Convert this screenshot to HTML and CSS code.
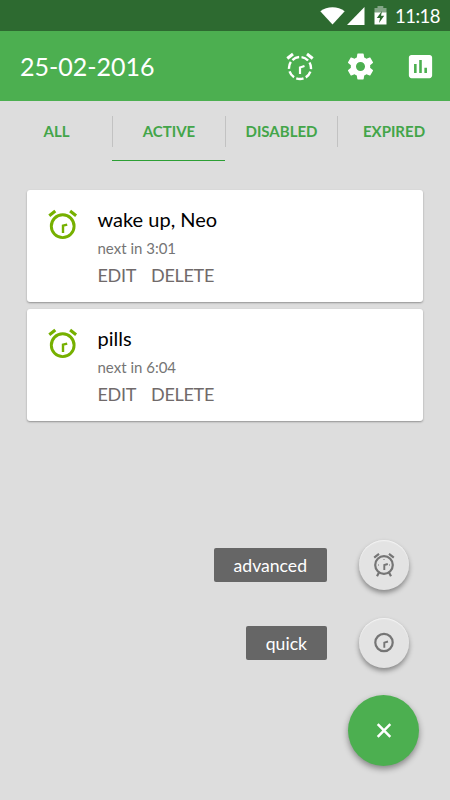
FILE: index.html
```html
<!DOCTYPE html>
<html lang="en">
<head>
<meta charset="utf-8">
<title>Alarms</title>
<link rel="stylesheet" href="styles.css">
</head>
<body>
<svg width="0" height="0" class="defs">
  <symbol id="alarm" viewBox="0 0 32 32">
    <g fill="none" stroke="currentColor" stroke-width="2.9">
      <circle cx="15.700" cy="18.200" r="11.400"/>
      <path d="M2.300 7.800 8.300 3M29.100 7.800 23.100 3" stroke-width="3.100"/>
      <path d="M16 25V17.700L20.200 16.600" stroke-width="2.400"/>
    </g>
  </symbol>
</svg>
<div class="screen">
  <header class="status">
    <svg class="wifi" width="25" height="18" viewBox="0 0 25 18"><path fill="#fff" d="M.3 4.3C7-1.2 18-1.2 24.700 4.300L12.500 17.600Z"/></svg>
    <svg class="signal" width="18" height="18" viewBox="0 0 18 18"><path fill="#fff" d="M17.500 0V18H0Z"/></svg>
    <svg class="battery" width="13" height="19" viewBox="0 0 13 19"><path fill="#83a586" d="M3.500 0H9.300V2H12.500V7H.500V2H3.500Z"/><path fill="#fff" d="M.500 6.500H12.500V18.500H.500Z"/><path fill="#2d6a30" d="M8 5 2.800 12H6L5 17 10.200 9.800H7Z"/></svg>
    <span class="clock">11:18</span>
  </header>
  <div class="appbar">
    <h1>25-02-2016</h1>
    <svg width="32" height="32" viewBox="0 0 32 32" fill="none" stroke="#fff" stroke-width="2.4"><circle cx="16" cy="18" r="11" stroke-dasharray="7.400 2.474" stroke-dashoffset="-13.580"/><path d="M3.300 8.500 9 4M28.700 8.500 23 4" stroke-width="3"/><path d="M16 24V17.500L20.500 16" stroke-width="2.200"/></svg>
    <svg width="31" height="31" viewBox="0 0 24 24"><path fill="#fff" d="M19.430 12.980c.040-.320.070-.640.070-.980s-.030-.660-.070-.980l2.110-1.650c.190-.150.240-.420.120-.640l-2-3.460c-.120-.220-.390-.300-.610-.220l-2.490 1c-.520-.400-1.080-.730-1.690-.980l-.380-2.650C14.460 2.180 14.250 2 14 2h-4c-.250 0-.460.180-.490.420l-.380 2.650c-.610.250-1.170.590-1.690.980l-2.490-1c-.230-.090-.490 0-.610.220l-2 3.460c-.130.220-.070.490.120.640l2.110 1.650c-.040.320-.070.650-.070.980s.030.660.070.980l-2.110 1.650c-.190.150-.240.420-.120.640l2 3.460c.120.220.390.300.610.220l2.490-1c.520.400 1.080.730 1.690.980l.380 2.650c.030.240.240.420.490.420h4c.250 0 .460-.180.490-.420l.380-2.650c.610-.250 1.170-.590 1.690-.980l2.490 1c.230.090.490 0 .610-.220l2-3.460c.120-.220.070-.490-.120-.640l-2.110-1.650zM12 15.500c-1.930 0-3.500-1.570-3.500-3.500s1.570-3.500 3.500-3.500 3.500 1.570 3.500 3.500-1.570 3.500-3.500 3.500z"/></svg>
    <svg width="31" height="31" viewBox="0 0 24 24"><path fill="#fff" d="M19 3H5c-1.100 0-2 .900-2 2v14c0 1.100.900 2 2 2h14c1.100 0 2-.900 2-2V5c0-1.100-.900-2-2-2zM9 17H7v-7h2v7zm4 0h-2V7h2v10zm4 0h-2v-4h2v4z"/></svg>
  </div>
  <nav class="tabs">
    <a>ALL</a><a class="on">ACTIVE</a><a>DISABLED</a><a>EXPIRED</a>
  </nav>
  <main class="list">
    <article class="card">
      <svg width="32" height="32"><use href="#alarm"/></svg>
      <div><h2>wake up, Neo</h2><p>next in 3:01</p><div class="actions"><span>EDIT</span><span>DELETE</span></div></div>
    </article>
    <article class="card">
      <svg width="32" height="32"><use href="#alarm"/></svg>
      <div><h2>pills</h2><p>next in 6:04</p><div class="actions"><span>EDIT</span><span>DELETE</span></div></div>
    </article>
  </main>
  <div class="menu">
    <div class="row">
      <span class="label">advanced</span>
      <span class="mini"><svg width="26" height="26" viewBox="0 0 26 26" fill="none" stroke="#757575" stroke-width="2.200"><circle cx="13" cy="13" r="8.800"/><path d="M3.200 5.600 8 1.800M22.800 5.600 18 1.800M8.300 20 6 24.300M17.700 20 20 24.300"/><path d="M13.300 18V13L16.800 12" stroke-width="1.900"/><path d="M7 13h1M18 13h1M13 7v1" stroke-width="1"/></svg></span>
    </div>
    <div class="row">
      <span class="label">quick</span>
      <span class="mini"><svg width="26" height="26" viewBox="0 0 26 26" fill="none" stroke="#757575" stroke-width="2.200"><circle cx="13" cy="12.500" r="8.700"/><path d="M13.300 17.800V12.700L17 11.500" stroke-width="1.900"/></svg></span>
    </div>
    <div class="fab"><svg width="16" height="16" viewBox="0 0 16 16"><path stroke="#fff" stroke-width="2.500" d="M1.700 1.200 14.300 13.800M14.300 1.200 1.700 13.800"/></svg></div>
  </div>
</div>
</body>
</html>
```
FILE: styles.css
```css
* { box-sizing: border-box; margin: 0; padding: 0; }
body { font-family: Lato, "Liberation Sans", sans-serif; background: #ddd; }
svg { display: block; flex: none; }
.defs { position: absolute; }
.screen { width: 450px; height: 800px; display: flex; flex-direction: column; background: #ddd; overflow: hidden; }
.status { height: 31px; background: #2d6a30; display: flex; align-items: center; justify-content: flex-end; padding-right: 10px; color: #fff; }
.signal { margin-left: 2px; }
.battery { margin-left: 9px; }
.clock { width: 45px; margin-left: 8px; font-size: 18.500px; letter-spacing: -.500px; line-height: 32px; white-space: nowrap; }
.appbar { height: 70px; background: #4caf50; display: flex; align-items: center; padding: 0 14.500px 0 20px; gap: 29px; color: #fff; }
.appbar h1 { flex: 1; font-size: 25px; font-weight: 400; line-height: 30px; }
.tabs { height: 60px; display: grid; grid-template-columns: 112px 113px 112px 113px; }
.tabs a { display: flex; justify-content: center; font-size: 15px; line-height: 30px; height: 60px; padding: 15px 0 0 1px; font-weight: 700; color: #43a549; background: linear-gradient(#c2c2c2, #c2c2c2) left 15px / 1px 31px no-repeat; }
.tabs a:first-child { background: none; }
.tabs .on { border-bottom: 1px solid #2c9f34; }
.list { padding: 29px 27px 0; display: flex; flex-direction: column; gap: 7px; }
.card { height: 112px; background: #fff; border-radius: 3px; box-shadow: 0 1px 2px rgba(0,0,0,.35); display: flex; padding: 18px 20px; gap: 18.500px; color: #76b000; }
.card h2 { font-size: 20px; font-weight: 400; line-height: 23px; color: #000; }
.card p { font-size: 15px; line-height: 20px; margin-top: 7px; color: #757575; }
.actions { display: flex; gap: 15px; font-size: 18px; letter-spacing: -.3px; line-height: 24px; margin-top: 5px; color: #706a6a; }
.menu { margin-top: auto; padding: 0 31px 34px; display: flex; flex-direction: column; align-items: flex-end; }
.row { display: flex; align-items: center; gap: 32px; height: 51px; margin: 0 10px 27px 0; }
.label { background: #666; color: #fff; border-radius: 2px; height: 34px; line-height: 35px; padding: 0 20px; font-size: 17.600px; }
.mini { width: 50px; height: 50px; border-radius: 50%; background: #e3e3e3; display: grid; place-items: center; box-shadow: 0 3px 5px rgba(0,0,0,.38), inset 0 1px 1px #f4f4f4; }
.fab { width: 71px; height: 71px; border-radius: 50%; background: #4caf50; display: grid; place-items: center; box-shadow: 0 3px 6px rgba(0,0,0,.4); }
```
